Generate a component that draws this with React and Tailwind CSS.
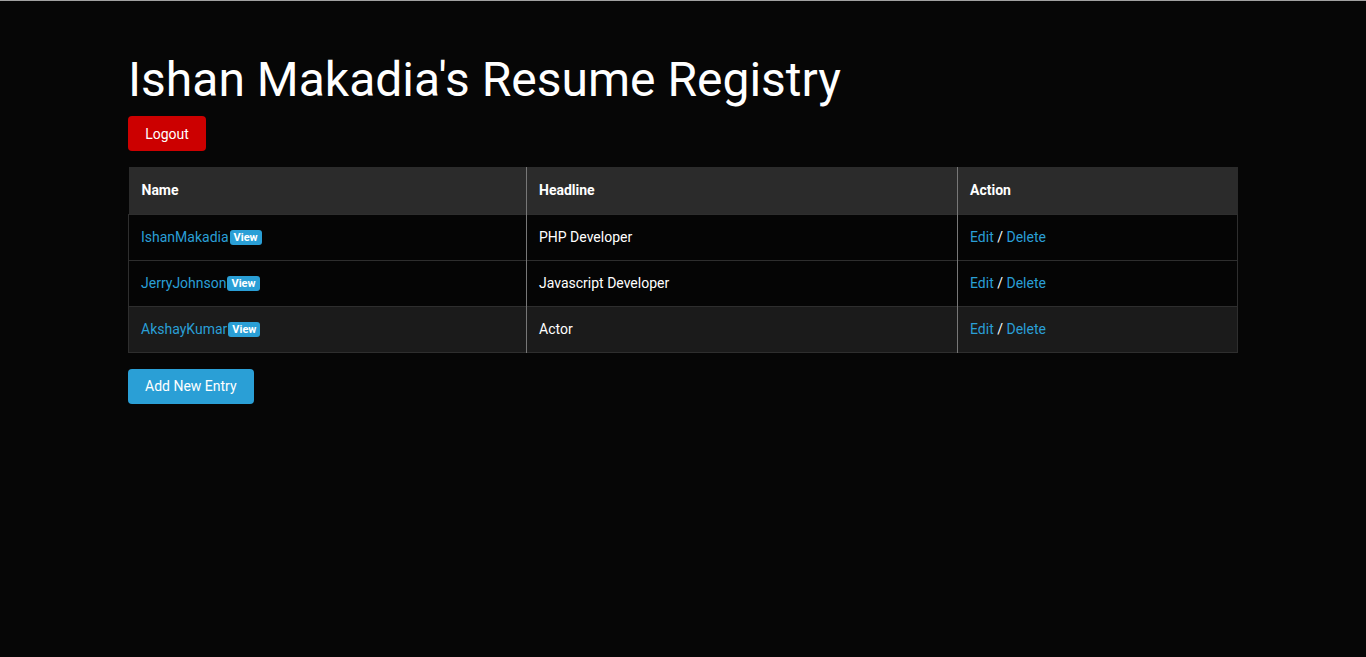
import React from "react";

const entries = [
  { name: "IshanMakadia", headline: "PHP Developer" },
  { name: "JerryJohnson", headline: "Javascript Developer" },
  { name: "AkshayKumar", headline: "Actor" },
];

function App() {
  return (
    <div
      className="min-h-screen bg-[#060606] border-t border-[#a0a0a0] text-white"
      style={{ fontFamily: "Roboto, 'Liberation Sans', sans-serif" }}
    >
      <div className="mx-auto w-[1110px] pt-[48px]">
        <h1 className="text-[48px] leading-[62px] font-normal mb-[5px]">
          Ishan Makadia's Resume Registry
        </h1>
        <button className="bg-[#cc0000] text-white text-[14px] leading-[20px] px-[17px] py-[7px] rounded-[4px] h-[35px] w-[78px]">
          Logout
        </button>

        <table className="w-full mt-[16px] border-collapse text-[14px]">
          <thead>
            <tr className="bg-[#2b2b2b] h-[47px]">
              <th className="w-[398px] text-left font-bold px-[13px] border-r border-[#777]">Name</th>
              <th className="w-[431px] text-left font-bold px-[12px] border-r border-[#777]">Headline</th>
              <th className="text-left font-bold px-[12px]">Action</th>
            </tr>
          </thead>
          <tbody>
            {entries.map((e, i) => (
              <tr
                key={e.name}
                className={`h-[46px] border border-[#2e2e2e] ${i === 2 ? "bg-[#1b1b1b]" : "bg-[#050505]"}`}
              >
                <td className="px-[12px] border-r border-[#777]">
                  <a className="text-[#2a9fd6] cursor-pointer">{e.name}</a>
                  <span className="inline-block align-middle bg-[#2a9fd6] text-white text-[11px] font-bold leading-[15px] px-[4px] rounded-[3px] ml-[1px]">
                    View
                  </span>
                </td>
                <td className="px-[12px] border-r border-[#777]">{e.headline}</td>
                <td className="px-[12px]">
                  <a className="text-[#2a9fd6] cursor-pointer">Edit</a> /{" "}
                  <a className="text-[#2a9fd6] cursor-pointer">Delete</a>
                </td>
              </tr>
            ))}
          </tbody>
        </table>

        <button className="mt-[16px] bg-[#2a9fd6] text-white text-[14px] leading-[20px] px-[17px] rounded-[4px] h-[35px]">
          Add New Entry
        </button>
      </div>
    </div>
  );
}

export default App;
